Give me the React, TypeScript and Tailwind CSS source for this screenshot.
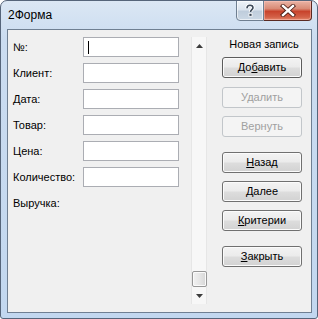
import React from "react";

const font = { fontFamily: '"Liberation Sans", Arial, sans-serif' };

function Btn({
  children,
  disabled,
  focused,
  className = "",
}: {
  children: React.ReactNode;
  disabled?: boolean;
  focused?: boolean;
  className?: string;
}) {
  if (disabled) {
    return (
      <div
        className={`w-[80px] h-[21px] rounded-[3px] border border-[#c2c6ca] bg-[#f4f4f4] flex items-center justify-center text-[11px] text-[#a0a0a0] ${className}`}
      >
        {children}
      </div>
    );
  }
  return (
    <div
      className={`w-[80px] h-[21px] rounded-[3px] border ${
        focused ? "border-[#5c5c5c]" : "border-[#707070]"
      } bg-[linear-gradient(to_bottom,#f3f3f3_0%,#ebebeb_48%,#dddddd_52%,#d2d2d2_100%)] shadow-[inset_0_0_0_1px_#fbfbfb] flex items-center justify-center text-[11px] text-black ${className}`}
    >
      {children}
    </div>
  );
}

function Row({ label, input = true }: { label: string; input?: boolean }) {
  return (
    <div className="flex items-center h-[20px]">
      <div className="w-[70px] text-[11px] text-black leading-none">{label}</div>
      {input && (
        <div className="w-[96px] h-[20px] border border-[#abadb3] bg-white"></div>
      )}
    </div>
  );
}

export default function App() {
  return (
    <div className="w-[318px] h-[319px] bg-white" style={font}>
      <div className="w-[318px] h-[319px] border border-[#56657a] rounded-t-[7px] rounded-b-[3px] bg-[linear-gradient(to_bottom,#dbe7f4_0%,#cbdcf0_12%,#c2d7ef_100%)] flex flex-col overflow-hidden">
        {/* Title bar */}
        <div className="h-[28px] flex items-start justify-between">
          <div className="pl-[7px] pt-[8px] text-[12px] text-black leading-none">2Форма</div>
          <div className="flex -mt-px mr-[5px]">
            <div className="w-[28px] h-[21px] border border-[#6f7f91] rounded-bl-[4px] bg-[linear-gradient(to_bottom,#eef3f8_0%,#dbe4ee_45%,#bfcddc_55%,#cbd8e5_100%)] flex items-center justify-center shadow-[inset_0_0_0_1px_rgba(255,255,255,0.6)]">
              <svg width="12" height="13" viewBox="0 0 12 13">
                <path
                  d="M3 4.2 C3 2 4.5 1.2 6 1.2 C7.8 1.2 9 2.3 9 3.8 C9 5.5 6.5 5.8 6.5 8"
                  fill="none"
                  stroke="#ffffff"
                  strokeWidth="3.4"
                />
                <path
                  d="M3 4.2 C3 2 4.5 1.2 6 1.2 C7.8 1.2 9 2.3 9 3.8 C9 5.5 6.5 5.8 6.5 8"
                  fill="none"
                  stroke="#3d4a59"
                  strokeWidth="1.6"
                />
                <rect x="5" y="9.3" width="3" height="3" fill="#3d4a59" stroke="#ffffff" strokeWidth="0.8" />
              </svg>
            </div>
            <div className="w-[48px] h-[21px] border border-[#5a2a22] border-l-0 rounded-br-[4px] bg-[linear-gradient(to_bottom,#eab4a6_0%,#d98b76_40%,#c8432c_55%,#d36148_85%,#e4886c_100%)] flex items-center justify-center shadow-[inset_0_0_0_1px_rgba(255,200,190,0.5)]">
              <svg width="16" height="13" viewBox="0 0 16 13">
                <path d="M3 2 L13 11 M13 2 L3 11" stroke="#4a1c14" strokeWidth="4.2" strokeLinecap="square" />
                <path d="M3 2 L13 11 M13 2 L3 11" stroke="#ffffff" strokeWidth="2.4" strokeLinecap="square" />
              </svg>
            </div>
          </div>
        </div>

        {/* Client area */}
        <div className="ml-[6px] mr-[5px] h-[284px] border border-[#6f7f92] bg-[#f0f0f0] flex">
          {/* Left form */}
          <div className="pl-[5px] pt-[7px] flex flex-col gap-[6px]">
            <div className="flex items-center h-[20px]">
              <div className="w-[70px] text-[11px] text-black leading-none">№:</div>
              <div className="w-[96px] h-[20px] border border-[#abadb3] bg-white flex items-center pl-[4px]">
                <div className="w-px h-[13px] bg-black"></div>
              </div>
            </div>
            <Row label="Клиент:" />
            <Row label="Дата:" />
            <Row label="Товар:" />
            <Row label="Цена:" />
            <Row label="Количество:" />
            <Row label="Выручка:" input={false} />
          </div>

          {/* Scrollbar */}
          <div className="ml-[12px] mt-[7px] w-[16px] h-[267px] border-x border-[#e6e6e6] bg-[#f7f7f7] flex flex-col items-center">
            <div className="h-[17px] flex items-center justify-center">
              <svg width="7" height="4" viewBox="0 0 7 4">
                <path d="M0 4 L3.5 0 L7 4 Z" fill="#3c3c3c" />
              </svg>
            </div>
            <div className="flex-1"></div>
            <div className="w-[15px] h-[16px] border border-[#979797] rounded-[2px] bg-[linear-gradient(to_right,#f1f1f1_0%,#e6e6e6_50%,#d6d6d6_100%)] shadow-[inset_0_0_0_1px_#fafafa]"></div>
            <div className="h-[17px] flex items-center justify-center">
              <svg width="7" height="4" viewBox="0 0 7 4">
                <path d="M0 0 L7 0 L3.5 4 Z" fill="#3c3c3c" />
              </svg>
            </div>
          </div>

          {/* Right buttons */}
          <div className="ml-[15px] pt-[7px] flex flex-col">
            <div className="h-[14px] text-[11px] text-black text-center leading-[14px] pl-[4px]">Новая запись</div>
            <Btn focused className="mt-[6px]">
              <span>
                До<span className="underline">б</span>авить
              </span>
            </Btn>
            <Btn disabled className="mt-[9px]">Удалить</Btn>
            <Btn disabled className="mt-[8px]">Вернуть</Btn>
            <Btn className="mt-[15px]">
              <span>
                <span className="underline">Н</span>азад
              </span>
            </Btn>
            <Btn className="mt-[8px]">
              <span>
                <span className="underline">Д</span>алее
              </span>
            </Btn>
            <Btn className="mt-[8px]">
              <span>
                <span className="underline">К</span>ритерии
              </span>
            </Btn>
            <Btn className="mt-[15px]">
              <span>
                <span className="underline">З</span>акрыть
              </span>
            </Btn>
          </div>
        </div>
      </div>
    </div>
  );
}
